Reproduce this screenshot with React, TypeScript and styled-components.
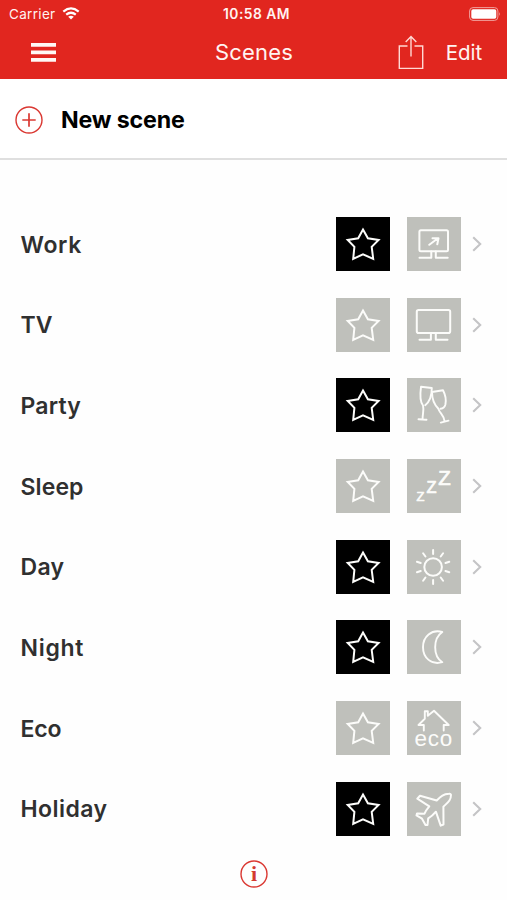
import React from "react";
import styled, { createGlobalStyle } from "styled-components";

const RED = "#e1261f";

const GlobalStyle = createGlobalStyle`
  * { box-sizing: border-box; }
  body { margin: 0; background: #fefefe; font-family: Inter, "Liberation Sans", sans-serif; }
  svg { display: block; flex: none; }
`;

const Screen = styled.main`
  width: 507px;
  height: 900px;
  display: flex;
  flex-direction: column;
  overflow: hidden;
  background: #fefefe;
`;

const Header = styled.header`
  height: 79px;
  flex: none;
  background: ${RED};
  color: #fff3f1;
`;

const StatusBar = styled.div`
  height: 27px;
  padding: 0 6px 0 9px;
  display: grid;
  grid-template-columns: 1fr auto 1fr;
  align-items: center;
  font-size: 13.5px;
`;

const Carrier = styled.div`
  display: flex;
  align-items: center;
  gap: 6px;
  letter-spacing: 0.32px;
`;

const Clock = styled.div`
  padding-left: 3px;
  font-weight: 600;
  font-size: 13.8px;
  letter-spacing: 0.5px;
`;

const Battery = styled.div`
  justify-self: end;
`;

const NavBar = styled.div`
  height: 52px;
  padding: 0 25px 0 31px;
  display: grid;
  grid-template-columns: 184px 1fr auto;
  align-items: center;
`;

const IconButton = styled.button`
  border: 0;
  padding: 0;
  background: none;
  color: inherit;
  display: flex;
`;

const Title = styled.h1`
  margin: 0 0 3px;
  font-size: 22px;
  line-height: 28px;
  font-weight: 400;
  letter-spacing: 0.2px;
`;

const NavActions = styled.div`
  display: flex;
  align-items: center;
  gap: 21.4px;
`;

const TextButton = styled.button`
  border: 0;
  padding: 0;
  background: none;
  color: inherit;
  font: 400 20.5px/26px Inter, sans-serif;
  letter-spacing: -0.1px;
`;

const NewScene = styled.section`
  height: 81px;
  flex: none;
  padding: 2px 0 0 15px;
  display: flex;
  align-items: center;
  gap: 18px;
  border-bottom: 2px solid #dfdfdf;
  background: #fff;
`;

const NewLabel = styled.span`
  padding-top: 1px;
  font-size: 23.2px;
  line-height: 30px;
  font-weight: 700;
  color: #000;
  letter-spacing: -0.15px;
`;

const List = styled.ul`
  list-style: none;
  margin: 43.8px 0 0;
  padding: 0;
`;

const Row = styled.li`
  height: 80.67px;
  padding: 0 25px 0 20.5px;
  display: flex;
  align-items: center;
`;

const Name = styled.span<{ $spacing: number }>`
  flex: 1;
  padding-top: 1.2px;
  font-size: 23px;
  line-height: 30px;
  font-weight: 600;
  color: #303030;
  letter-spacing: ${(p) => p.$spacing}px;
`;

const Tile = styled.div<{ $active?: boolean }>`
  width: 54px;
  height: 54px;
  margin-right: ${(p) => (p.$active === undefined ? 11.4 : 17)}px;
  background: ${(p) => (p.$active ? "#000" : "#bfc0bb")};
  color: #fcfcfa;
`;

const Footer = styled.footer`
  display: flex;
  justify-content: center;
  padding-top: 11.2px;
`;

const Glyph = ({ children }: { children: React.ReactNode }) => (
  <svg width="54" height="54" viewBox="0 0 54 54" fill="none" stroke="currentColor" strokeWidth="2" strokeLinecap="round" strokeLinejoin="round">
    {children}
  </svg>
);

const Star = () => (
  <Glyph>
    <path d="M27 12.5 31.9 21.3 42.6 22.9 35.7 29.9 37.2 41.8 27 37.3 17.2 41.8 18.4 29.9 11.7 22.9 22.2 21.3Z" strokeLinejoin="miter" strokeWidth="2" />
  </Glyph>
);

const rays = Array.from({ length: 10 }, (_, i) => i * 36);

const icons = {
  work: (
    <Glyph>
      <rect x="12.4" y="13.3" width="28.6" height="21" rx="1.5" />
      <path d="M24.3 34.5V40.7H12.5M28.8 34.5V40.7H40.7M22.3 27.8 31 21.3M25.5 21.3H31.5L30.3 27.3" />
    </Glyph>
  ),
  tv: (
    <Glyph>
      <rect x="9.8" y="12" width="33.4" height="23" rx="1.8" />
      <path d="M12.5 41.8H23.9V35M28.8 35V41.8H40.5" />
    </Glyph>
  ),
  party: (
    <Glyph>
      <path d="M11.5 41.2 19.5 41.8M15.6 41C15.5 36 17.2 32 16 27.5 12.3 23 13.3 14 14 8.8L24.8 10C24.8 17 23.6 23 18.2 27.2" strokeWidth="1.9" />
      <path d="M33.8 44.6 41.5 42.7M37.6 43.4C36.8 36.5 33 36 31.2 30.5 26.8 26 25 20 25 14L36 12.3C38.5 17 39.3 22 38.4 26.5 37.8 28.7 36.3 30.4 33.6 30.8" strokeWidth="1.9" />
    </Glyph>
  ),
  sleep: (
    <Glyph>
      <g fill="currentColor" stroke="currentColor" strokeWidth="0.7" fontFamily="Liberation Sans, sans-serif">
        <text x="9.4" y="41.5" fontSize="13">Z</text>
        <text x="19.6" y="33.8" fontSize="16.5">Z</text>
        <text x="31.2" y="26" fontSize="20.5">Z</text>
      </g>
    </Glyph>
  ),
  day: (
    <Glyph>
      <circle cx="26.1" cy="27" r="8.8" />
      {rays.map((a) => (
        <path key={a} d="M26.1 14V10" transform={`rotate(${a} 26.1 27)`} />
      ))}
    </Glyph>
  ),
  night: (
    <Glyph>
      <path d="M35.3 12C24.5 9 16 16.5 16 27.2S24.5 45.3 35.3 42.2C25.8 36 25.8 18.5 35.3 12Z" strokeWidth="1.9" />
    </Glyph>
  ),
  eco: (
    <Glyph>
      <path d="M16.8 29.5V24H11.5L17.8 17.8V10.3H20.8V14.7L27 9.8 41.7 24H36.7V29.5" strokeWidth="1.9" />
      <text x="7.4" y="44.6" fontSize="22.5" letterSpacing="0.8" fill="currentColor" stroke="none" fontFamily="Liberation Sans, sans-serif">eco</text>
    </Glyph>
  ),
  holiday: (
    <Glyph>
      <path d="M44 12.7C43.7 11.8 43 11.5 42 11.7 36.5 12 34 14 29.7 18.5L13 13.8 10.3 16.7 22.3 24.3Q19 28 17.5 31.7L10 31.4 9.5 33.4 15 36.7 18.5 43H20.5L21.2 36.3Q25.5 34 28.9 29.7L33.7 43.6 36.5 42.5 36.4 24.7C40.7 20.5 44 18.5 44 12.7Z" strokeWidth="2" />
    </Glyph>
  ),
};

const scenes: { name: string; icon: keyof typeof icons; favourite: boolean; spacing: number }[] = [
  { name: "Work", icon: "work", favourite: true, spacing: 0.65 },
  { name: "TV", icon: "tv", favourite: false, spacing: 0.1 },
  { name: "Party", icon: "party", favourite: true, spacing: 0.2 },
  { name: "Sleep", icon: "sleep", favourite: false, spacing: 0.1 },
  { name: "Day", icon: "day", favourite: true, spacing: 0.3 },
  { name: "Night", icon: "night", favourite: true, spacing: 0.7 },
  { name: "Eco", icon: "eco", favourite: false, spacing: -0.2 },
  { name: "Holiday", icon: "holiday", favourite: true, spacing: 0.45 },
];

export default function App() {
  return (
    <>
      <GlobalStyle />
      <Screen>
        <Header>
          <StatusBar>
            <Carrier>
              Carrier
              <svg width="18" height="13" viewBox="0 0 18 13" fill="none" stroke="#fff" strokeWidth="2.2">
                <path d="M1.3 4.6Q9-1.8 16.7 4.6M4.2 7.7Q9 3.8 13.8 7.7" />
                <path d="M6.2 9.7Q9 7.6 11.8 9.7L9 12.6Z" fill="#fff" stroke="none" />
              </svg>
            </Carrier>
            <Clock>10:58 AM</Clock>
            <Battery>
              <svg width="32" height="14" viewBox="0 0 32 14">
                <rect x=".6" y=".6" width="28.3" height="12.8" rx="3.4" fill="none" stroke="#f1a09c" />
                <rect x="2.3" y="2.3" width="25" height="9.4" rx="1.8" fill="#fff" />
                <path d="M30.2 5Q32 7 30.2 9Z" fill="#f1a09c" />
              </svg>
            </Battery>
          </StatusBar>
          <NavBar>
            <IconButton aria-label="Menu">
              <svg width="25" height="20" viewBox="0 0 25 20" fill="#fff8f5">
                <path d="M0 0H25V3.8H0ZM0 7.5H25V11.3H0ZM0 15H25V18.8H0Z" />
              </svg>
            </IconButton>
            <Title>Scenes</Title>
            <NavActions>
              <IconButton aria-label="Share">
                <svg width="26" height="36" viewBox="0 0 26 36" fill="none" stroke="#ffd9d4" strokeWidth="1.4">
                  <path d="M9.5 11H1.3V33.4H24.7V11H16.5M13 21.5V1.5M7.7 6.9 13 1.5 18.3 6.9" />
                </svg>
              </IconButton>
              <TextButton>Edit</TextButton>
            </NavActions>
          </NavBar>
        </Header>
        <NewScene>
          <svg width="28" height="28" viewBox="0 0 28 28" fill="none" stroke="#da3832">
            <circle cx="14" cy="14" r="13" strokeWidth="1.4" />
            <path d="M14 7.3V20.7M7.3 14H20.7" strokeWidth="1.7" />
          </svg>
          <NewLabel>New scene</NewLabel>
        </NewScene>
        <List>
          {scenes.map((s) => (
            <Row key={s.name}>
              <Name $spacing={s.spacing}>{s.name}</Name>
              <Tile $active={s.favourite}><Star /></Tile>
              <Tile>{icons[s.icon]}</Tile>
              <svg width="10" height="16" viewBox="0 0 10 16" fill="none" stroke="#c4c4c6" strokeWidth="2.1">
                <path d="M1.2 1.3 8.2 8 1.2 14.7" />
              </svg>
            </Row>
          ))}
        </List>
        <Footer>
          <svg width="28" height="28" viewBox="0 0 28 28">
            <circle cx="14" cy="14" r="13" fill="none" stroke="#da3832" strokeWidth="1.4" />
            <text x="14" y="21.3" textAnchor="middle" fontFamily="Liberation Serif, serif" fontWeight="700" fontSize="22" fill="#d33a30">i</text>
          </svg>
        </Footer>
      </Screen>
    </>
  );
}
